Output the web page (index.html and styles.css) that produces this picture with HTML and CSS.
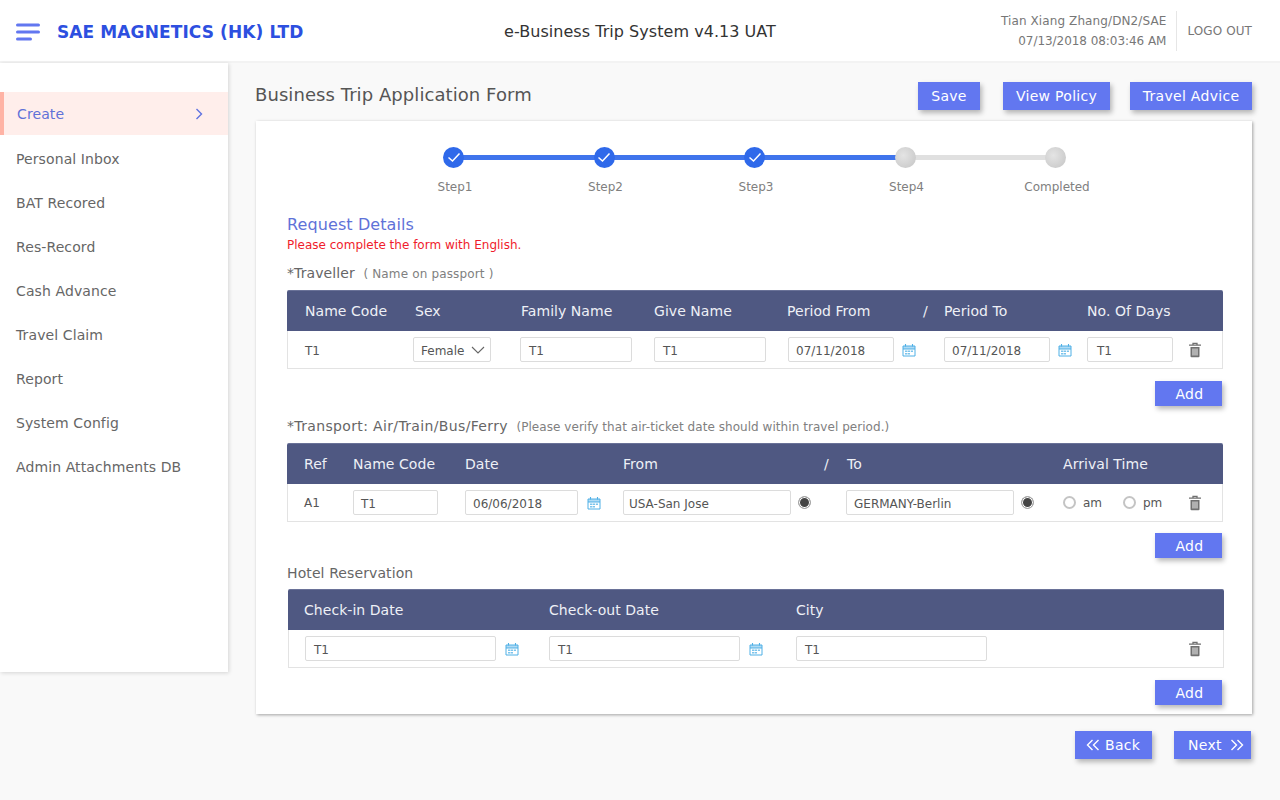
FILE: index.html
```html
<!DOCTYPE html>
<html lang="en">
<head>
    <meta charset="UTF-8">
    <title>e-Business Trip System</title>
    <link rel="stylesheet" href="styles.css">
</head>
<body>
    <svg class="defs" width="0" height="0">
        <symbol id="cal" viewBox="0 0 14 14">
            <path d="M1 3h12v10H1z M1 6h12" fill="none" stroke="#4fb0e6" stroke-width="1"/>
            <path d="M1 3h12v3H1z" fill="#4fb0e6" opacity=".45"/>
            <path d="M3.500 1v2.500M10.500 1v2.500" stroke="#4fb0e6" stroke-width="1.100"/>
            <path d="M3 7.500h2.500v1.500H3zM6 7.500h2v1.500H6zM8.800 7.500h2.200v1.500H8.800zM3 10h2.500v1.500H3zM6 10h2v1.500H6z" fill="#4fb0e6" opacity=".75"/>
        </symbol>
        <symbol id="trash" viewBox="0 0 14 16">
            <path d="M1 3.200h12M5 3V1.400h4V3" fill="none" stroke="#707070" stroke-width="1.300"/>
            <path d="M2.500 5h9v9.200a1 1 0 0 1-1 1h-7a1 1 0 0 1-1-1z" fill="#707070"/>
            <path d="M5 6.500v7M7 6.500v7M9 6.500v7" stroke="#fff" stroke-width=".9"/>
        </symbol>
    </svg>

    <header class="topbar">
        <div class="brand">
            <svg class="menu-icon" width="24" height="18" viewBox="0 0 24 18"><path d="M1.500 2h21M1.500 9h21M1.500 16h13" stroke="#6277f0" stroke-width="3" stroke-linecap="round"/></svg>
            <span class="brand-name">SAE MAGNETICS (HK) LTD</span>
        </div>
        <div class="sys-title">e-Business Trip System v4.13 UAT</div>
        <div class="user-box">
            <div class="user-info">
                <div>Tian Xiang Zhang/DN2/SAE</div>
                <div class="user-time">07/13/2018 08:03:46 AM</div>
            </div>
            <a class="logout">LOGO OUT</a>
        </div>
    </header>

    <div class="page">
        <nav class="sidebar">
            <a class="nav-item active">Create
                <svg width="8" height="12" viewBox="0 0 8 12"><path d="M1.500 1l5 5-5 5" fill="none" stroke="#5f72e0" stroke-width="1.400"/></svg>
            </a>
            <a class="nav-item">Personal Inbox</a>
            <a class="nav-item">BAT Recored</a>
            <a class="nav-item">Res-Record</a>
            <a class="nav-item">Cash Advance</a>
            <a class="nav-item">Travel Claim</a>
            <a class="nav-item">Report</a>
            <a class="nav-item">System Config</a>
            <a class="nav-item">Admin Attachments DB</a>
        </nav>

        <main class="content">
            <div class="title-row">
                <h1>Business Trip Application Form</h1>
                <div class="top-actions">
                    <button class="btn btn-save">Save</button>
                    <button class="btn btn-policy">View Policy</button>
                    <button class="btn btn-advice">Travel Advice</button>
                </div>
            </div>

            <section class="card">
                <div class="steps">
                    <div class="step done"><span class="dot"><svg width="14" height="11" viewBox="0 0 14 11"><path d="M1.500 5.500l4 3.500 7-7.500" fill="none" stroke="#fff" stroke-width="1.500"/></svg></span><label>Step1</label></div>
                    <div class="step done"><span class="dot"><svg width="14" height="11" viewBox="0 0 14 11"><path d="M1.500 5.500l4 3.500 7-7.500" fill="none" stroke="#fff" stroke-width="1.500"/></svg></span><label>Step2</label></div>
                    <div class="step done"><span class="dot"><svg width="14" height="11" viewBox="0 0 14 11"><path d="M1.500 5.500l4 3.500 7-7.500" fill="none" stroke="#fff" stroke-width="1.500"/></svg></span><label>Step3</label></div>
                    <div class="step"><span class="dot"></span><label>Step4</label></div>
                    <div class="step"><span class="dot"></span><label>Completed</label></div>
                </div>

                <h2>Request Details</h2>
                <p class="warn">Please complete the form with English.</p>

                <div class="sec-label sec-traveller">*Traveller <small>( Name on passport )</small></div>
                <div class="tbl">
                    <div class="tbl-head traveller-head">
                        <span>Name Code</span><span>Sex</span><span>Family Name</span><span>Give Name</span><span>Period From</span><span>/</span><span>Period To</span><span>No. Of Days</span>
                    </div>
                    <div class="tbl-row traveller-row">
                        <span>T1</span>
                        <div class="field select"><span>Female</span> <svg width="14" height="8" viewBox="0 0 14 8"><path d="M1 1l6 6 6-6" fill="none" stroke="#666" stroke-width="1.100"/></svg></div>
                        <div class="field">T1</div>
                        <div class="field">T1</div>
                        <div class="with-cal"><div class="field">07/11/2018</div><svg class="cal"><use href="#cal"/></svg></div>
                        <div class="with-cal"><div class="field">07/11/2018</div><svg class="cal"><use href="#cal"/></svg></div>
                        <div class="field">T1</div>
                        <svg class="trash"><use href="#trash"/></svg>
                    </div>
                </div>
                <div class="add-row"><button class="btn btn-add">Add</button></div>

                <div class="sec-label sec-transport"><span class="wide">*Transport: Air/Train/Bus/Ferry</span> <small>(Please verify that air-ticket date should within travel period.)</small></div>
                <div class="tbl">
                    <div class="tbl-head transport-head">
                        <span>Ref</span><span>Name Code</span><span>Date</span><span>From</span><span>/</span><span>To</span><span>Arrival Time</span>
                    </div>
                    <div class="tbl-row transport-row">
                        <span class="ref">A1</span>
                        <div class="field">T1</div>
                        <div class="with-cal"><div class="field">06/06/2018</div><svg class="cal"><use href="#cal"/></svg></div>
                        <div class="with-radio"><div class="field tight">USA-San Jose</div><span class="radio on"></span></div>
                        <div class="with-radio"><div class="field">GERMANY-Berlin</div><span class="radio on"></span></div>
                        <div class="ampm"><span class="radio"></span>am</div>
                        <div class="ampm"><span class="radio"></span>pm</div>
                        <svg class="trash"><use href="#trash"/></svg>
                    </div>
                </div>
                <div class="add-row add-tight"><button class="btn btn-add">Add</button></div>

                <div class="sec-label sec-hotel">Hotel Reservation</div>
                <div class="tbl tbl-hotel">
                    <div class="tbl-head hotel-head">
                        <span>Check-in Date</span><span>Check-out Date</span><span>City</span>
                    </div>
                    <div class="tbl-row hotel-row">
                        <div class="with-cal"><div class="field">T1</div><svg class="cal"><use href="#cal"/></svg></div>
                        <div class="with-cal"><div class="field">T1</div><svg class="cal"><use href="#cal"/></svg></div>
                        <div class="field">T1</div>
                        <svg class="trash"><use href="#trash"/></svg>
                    </div>
                </div>
                <div class="add-row"><button class="btn btn-add">Add</button></div>
            </section>

            <div class="bottom-actions">
                <button class="btn btn-nav btn-back"><svg width="14" height="12" viewBox="0 0 14 12"><path d="M6.500 1l-5 5 5 5M12.500 1l-5 5 5 5" fill="none" stroke="#fff" stroke-width="1.400"/></svg>Back</button>
                <button class="btn btn-nav btn-next">Next<svg width="14" height="12" viewBox="0 0 14 12"><path d="M1.500 1l5 5-5 5M7.500 1l5 5-5 5" fill="none" stroke="#fff" stroke-width="1.400"/></svg></button>
            </div>
        </main>
    </div>
</body>
</html>
```

FILE: styles.css
```css
* {
    margin: 0;
    padding: 0;
    box-sizing: border-box;
}
body {
    background-color: #f9f9f9;
    font-family: "DejaVu Sans", Verdana, sans-serif;
    font-size: 14px;
    letter-spacing: .1px;
    color: #666;
    overflow: hidden;
    height: 800px;
}
.defs {
    position: absolute;
}

/* top bar */
.topbar {
    height: 63px;
    background-color: #fff;
    border-bottom: 2px solid #f3f3f3;
    display: grid;
    grid-template-columns: 1fr auto 1fr;
    align-items: center;
    padding: 0 28px 0 16px;
}
.brand {
    display: flex;
    align-items: center;
    gap: 17px;
    margin-top: 2px;
}
.brand-name {
    font-size: 17px;
    font-weight: bold;
    color: #2d4fe0;
    white-space: nowrap;
}
.sys-title {
    text-align: center;
    font-size: 16px;
    letter-spacing: .04px;
    color: #333;
    white-space: nowrap;
    margin-top: 1px;
    margin-left: 12px;
}
.user-box {
    display: flex;
    justify-content: flex-end;
    align-items: center;
    font-size: 12px;
    color: #777;
}
.user-info {
    text-align: right;
    line-height: 20px;
    padding-right: 10px;
    border-right: 1px solid #e6e6e6;
    white-space: nowrap;
}
.user-time {
    letter-spacing: -.05px;
}
.logout {
    padding-left: 10px;
}

.page {
    display: flex;
    align-items: flex-start;
}

/* sidebar */
.sidebar {
    width: 228px;
    height: 609px;
    background-color: #fff;
    box-shadow: 1px 1px 4px rgba(0, 0, 0, .15);
    padding-top: 29px;
    flex-shrink: 0;
}
.nav-item {
    display: flex;
    align-items: center;
    justify-content: space-between;
    height: 44px;
    padding: 0 25px 0 16px;
    color: #666;
}
.nav-item.active {
    height: 43px;
    margin-bottom: 2px;
    background-color: #ffeeeb;
    border-left: 4px solid #ffb3a5;
    padding-left: 13px;
    color: #5f72d8;
}

/* main */
.content {
    width: 997px;
    margin-left: 27px;
}
.title-row {
    display: flex;
    justify-content: space-between;
    align-items: center;
    height: 58px;
    padding-top: 2px;
}
h1 {
    font-size: 18px;
    font-weight: normal;
    letter-spacing: .07px;
    color: #555;
    margin-top: 2px;
}
.top-actions {
    display: flex;
    margin-top: 5px;
}
.btn {
    border: 0;
    background-color: #6277f0;
    color: #fff;
    font-family: inherit;
    font-size: 14px;
    letter-spacing: .3px;
    box-shadow: 2px 3px 5px rgba(0, 0, 0, .28);
}
.btn-save,
.btn-policy,
.btn-advice {
    height: 28px;
}
.btn-save { width: 62px; }
.btn-policy { width: 107px; margin-left: 23px; }
.btn-advice { width: 122px; margin-left: 20px; }

.card {
    margin-left: 1px;
    width: 996px;
    height: 593px;
    background-color: #fff;
    box-shadow: 1px 1px 3px rgba(0, 0, 0, .35);
    padding: 26px 30px 0 31px;
}

/* stepper */
.steps {
    display: grid;
    grid-template-columns: repeat(5, 150.5px);
    justify-content: center;
}
.step {
    position: relative;
    display: flex;
    flex-direction: column;
    align-items: center;
    font-size: 12px;
    letter-spacing: 0;
    color: #808080;
}
.step .dot {
    width: 21px;
    height: 21px;
    border-radius: 50%;
    background: radial-gradient(circle at 40% 40%, #e4e4e4, #c4c4c4);
    display: flex;
    align-items: center;
    justify-content: center;
    position: relative;
    z-index: 1;
}
.step.done .dot {
    background: #2f69ea;
}
.step::after {
    content: "";
    position: absolute;
    left: 50%;
    width: 100%;
    top: 8px;
    height: 5px;
    background-color: #e0e0e0;
}
.step.done::after {
    background-color: #3f74ec;
}
.step:last-child::after {
    display: none;
}
.step label {
    margin-top: 12px;
    margin-left: 3px;
}

h2 {
    font-size: 16px;
    font-weight: normal;
    color: #5f72d8;
    margin-top: 21px;
}
.warn {
    font-size: 12px;
    letter-spacing: 0;
    color: #f01c2c;
    margin-top: 4px;
}
.sec-label {
    font-size: 14px;
    color: #666;
    white-space: nowrap;
}
.sec-label small {
    font-size: 12px;
    letter-spacing: .15px;
    color: #808080;
    margin-left: 4px;
}
.wide {
    letter-spacing: .35px;
}
.sec-traveller {
    margin-top: 13px;
    margin-bottom: 9px;
}
.sec-transport {
    margin-top: 12px;
    margin-bottom: 9px;
}
.sec-transport small {
    letter-spacing: .05px;
}
.sec-hotel {
    margin-top: 7px;
    margin-bottom: 8px;
}

/* tables */
.tbl {
    width: 936px;
}
.tbl-hotel {
    margin-left: 1px;
}
.tbl-head {
    display: grid;
    align-items: center;
    height: 41px;
    background-color: #4f5882;
    color: #eef0f6;
    letter-spacing: .05px;
    border-top: 1px solid #6a7298;
    border-radius: 2px 2px 0 0;
    white-space: nowrap;
}
.tbl-row {
    display: grid;
    align-items: center;
    height: 38px;
    border: 1px solid #e3e3e3;
    border-top: 0;
    font-size: 12px;
    letter-spacing: 0;
    color: #555;
}
.traveller-head {
    grid-template-columns: 110px 106px 133px 133px 136px 21px 143px 100px;
    padding-left: 18px;
}
.traveller-row {
    grid-template-columns: 108px 107px 134px 134px 156px 143px 101px 20px;
    padding-left: 17px;
}
.transport-head {
    grid-template-columns: 49px 112px 158px 201px 23px 216px 120px;
    padding-left: 17px;
}
.transport-row {
    grid-template-columns: 48px 112px 158px 223px 217px 60px 66px 20px;
    padding-left: 16px;
}
.hotel-head {
    grid-template-columns: 245px 247px 200px;
    padding-left: 16px;
}
.hotel-row {
    grid-template-columns: 244px 247px 392px 20px;
    padding-left: 16px;
}
.field {
    height: 25px;
    line-height: 26px;
    border: 1px solid #dcdcdc;
    border-radius: 2px;
    padding-left: 8px;
    background-color: #fff;
    white-space: nowrap;
}
.field.tight {
    padding-left: 5px;
}
.traveller-row > span {
    padding-top: 2px;
}
.traveller-row > .field { width: 112px; }
.traveller-row > .field:last-of-type { width: 86px; padding-left: 9px; }
.traveller-row .with-cal .field {
    width: 106px;
    padding-left: 7px;
}
.traveller-row .select {
    width: 78px;
    display: flex;
    align-items: center;
    justify-content: space-between;
    padding: 0 5px 0 7px;
}
.select span {
    padding-top: 2px;
}
.transport-row > .field {
    width: 85px;
    margin-left: 1px;
    padding-left: 7px;
}
.transport-row .with-cal {
    gap: 9px;
    margin-left: 1px;
}
.transport-row .with-cal .field {
    width: 113px;
    padding-left: 7px;
}
.transport-row .with-radio {
    gap: 7px;
    margin-left: 1px;
}
.transport-row .with-radio .field {
    width: 168px;
    padding-left: 7px;
}
.transport-row .with-radio .field.tight {
    padding-left: 5px;
}
.hotel-row > .field,
.hotel-row .with-cal .field { width: 191px; }

.with-cal,
.with-radio {
    display: flex;
    align-items: center;
    gap: 8px;
}
.hotel-row .with-cal {
    gap: 9px;
}
.cal {
    width: 14px;
    height: 14px;
}
.trash {
    width: 14px;
    height: 16px;
}
.radio {
    display: inline-block;
    width: 13px;
    height: 13px;
    border-radius: 50%;
    border: 2px solid #c4c4c4;
    background-color: #fff;
    flex-shrink: 0;
}
.radio.on {
    background-color: #444;
    box-shadow: inset 0 0 0 1px #fff;
    border: 1px solid #aaa;
}
.ampm {
    display: flex;
    align-items: center;
    gap: 7px;
    margin-left: 1px;
}
.ref {
    font-size: 12px;
}

.add-row {
    display: flex;
    justify-content: flex-end;
    width: 935px;
    margin-top: 12px;
}
.add-tight {
    margin-top: 11px;
}
.btn-add {
    width: 67px;
    height: 25px;
    padding-left: 2px;
}

.bottom-actions {
    display: flex;
    justify-content: flex-end;
    gap: 22px;
    width: 996px;
    margin-top: 17px;
}
.btn-nav {
    width: 77px;
    height: 28px;
    display: flex;
    align-items: center;
    font-size: 14px;
}
.btn-back {
    gap: 5px;
    padding-left: 11px;
}
.btn-next {
    gap: 8px;
    padding-left: 14px;
}
```
